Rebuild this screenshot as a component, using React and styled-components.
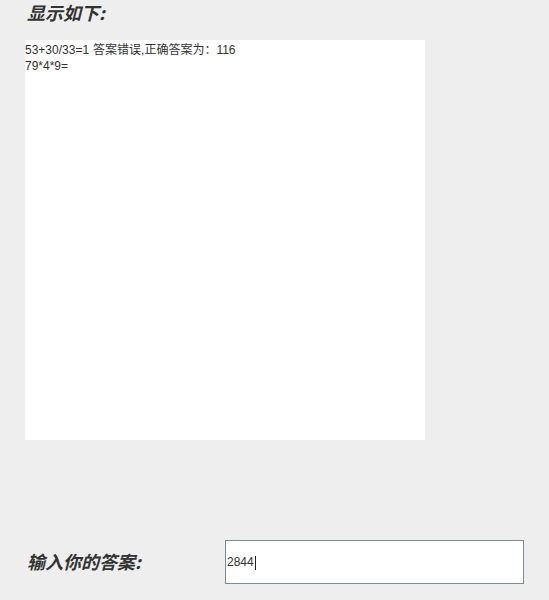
import React from "react";
import styled, { createGlobalStyle } from "styled-components";

const GlobalStyle = createGlobalStyle`
  html, body {
    margin: 0;
    padding: 0;
    background: #eeeeee;
  }
  body {
    width: 549px;
    height: 600px;
    overflow: hidden;
    font-family: "Liberation Sans", "Noto Sans CJK SC", sans-serif;
    color: #333333;
  }
`;

const Page = styled.div`
  width: 549px;
  height: 600px;
  background: #eeeeee;
  display: flex;
  flex-direction: column;
`;

const Heading = styled.div`
  margin-left: 27px;
  height: 24px;
  line-height: 24px;
  font-family: "Noto Sans CJK SC", sans-serif;
  font-size: 18px;
  font-weight: 700;
  font-style: italic;
  color: #333333;
`;

const Output = styled.div`
  margin-top: 16px;
  margin-left: 25px;
  width: 400px;
  height: 400px;
  box-sizing: border-box;
  padding-top: 2px;
  background: #ffffff;
  font-family: "Liberation Sans", "Noto Sans CJK SC", sans-serif;
  font-size: 12px;
  line-height: 16px;
  color: #333333;
  white-space: pre;
`;

const Line = styled.div`
  height: 16px;
`;

const Verdict = styled.span`
  margin-left: 4px;
`;

const InputRow = styled.div`
  margin-top: 100px;
  padding-left: 27px;
  display: grid;
  grid-template-columns: 198px 299px;
  align-items: center;
  height: 44px;
`;

const Label = styled.div`
  margin-bottom: 3px;
  font-family: "Noto Sans CJK SC", sans-serif;
  font-size: 18px;
  font-weight: 700;
  font-style: italic;
  color: #333333;
  line-height: 24px;
`;

const Field = styled.div`
  box-sizing: border-box;
  height: 44px;
  border: 1px solid #7a8a99;
  background: #ffffff;
  padding-left: 1px;
  display: flex;
  align-items: center;
  font-family: "Liberation Sans", sans-serif;
  font-size: 12px;
  color: #333333;
`;

const Caret = styled.span`
  display: inline-block;
  width: 1px;
  height: 14px;
  margin-left: 1px;
  margin-top: 1px;
  background: #222222;
`;

export default function App() {
  return (
    <>
      <GlobalStyle />
      <Page>
        <Heading>显示如下:</Heading>
        <Output>
          <Line>
            53+30/33=1<Verdict>答案错误,正确答案为：116</Verdict>
          </Line>
          <Line>79*4*9=</Line>
        </Output>
        <InputRow>
          <Label>输入你的答案:</Label>
          <Field>
            2844
            <Caret />
          </Field>
        </InputRow>
      </Page>
    </>
  );
}
